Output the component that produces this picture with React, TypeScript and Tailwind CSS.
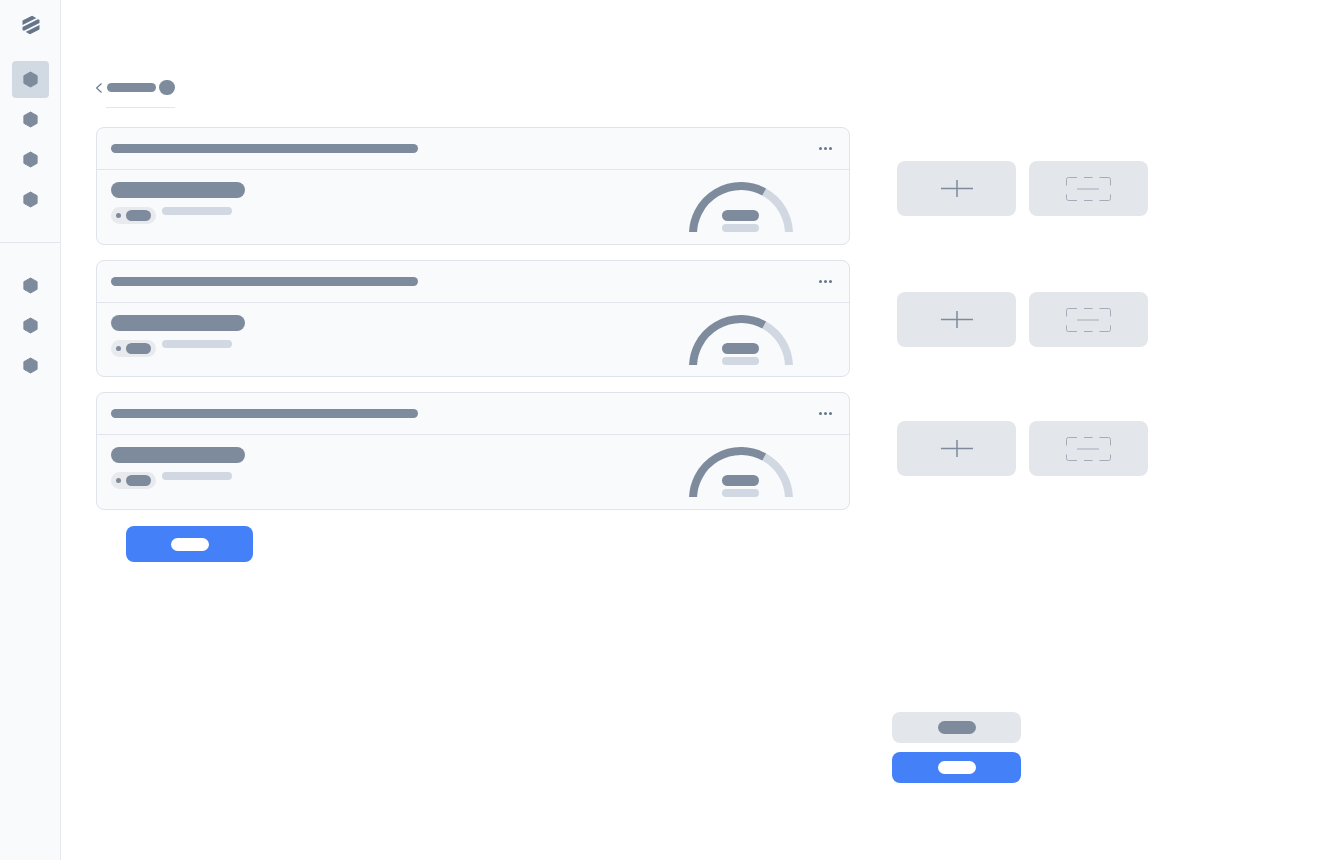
const Hex = () => (
  <svg width="17" height="17" viewBox="0 0 17 17" className="block">
    <path d="M8.5 1 L15.1 4.7 V12.3 L8.5 16 L1.9 12.3 V4.7 Z" fill="#7e8b9c" stroke="#7e8b9c" strokeLinejoin="round" />
  </svg>
);

const Logo = () => (
  <svg width="18" height="20" viewBox="0 0 18 20" className="block">
    <clipPath id="logo-hex">
      <path d="M9 0 L17.5 5 V15 L9 20 L0.5 15 V5 Z" />
    </clipPath>
    <g clipPath="url(#logo-hex)" stroke="#66758a" strokeWidth="4" fill="none">
      <path d="M-2 9 L20 -2" />
      <path d="M-2 15.5 L20 4.5" />
      <path d="M-2 22 L20 11" />
    </g>
  </svg>
);

const NavItem = ({ active }: { active?: boolean }) => (
  <div className={`w-[37px] h-[37px] rounded flex items-center justify-center ${active ? "bg-[#d1d9e3]" : ""}`}>
    <Hex />
  </div>
);

const Gauge = () => (
  <div className="relative w-[104px] h-[50px]">
    <svg width="104" height="50" viewBox="0 0 104 50" fill="none" className="block">
      <path d="M75.2 10 A48 48 0 0 1 100 52" stroke="#d1d8e2" strokeWidth="8" />
      <path d="M4 52 A48 48 0 0 1 75.2 10" stroke="#7e8b9c" strokeWidth="8" />
    </svg>
    <div className="absolute left-[33px] top-[28px] flex flex-col gap-[3px]">
      <div className="w-[37px] h-[11px] rounded-full bg-[#7e8b9c]" />
      <div className="w-[37px] h-[8px] rounded-full bg-[#d1d8e2]" />
    </div>
  </div>
);

const Card = () => (
  <div className="w-[754px] h-[117.5px] rounded-lg border border-[#dfe3ea] bg-[#f8fafc]">
    <div className="h-[42px] border-b border-[#e2e6ec] pl-[14px] pr-[17px] flex items-center justify-between">
      <div className="w-[307px] h-[9px] rounded-full bg-[#7e8b9c]" />
      <div className="flex gap-[2px]">
        <div className="w-[3px] h-[3px] rounded-full bg-[#66758a]" />
        <div className="w-[3px] h-[3px] rounded-full bg-[#66758a]" />
        <div className="w-[3px] h-[3px] rounded-full bg-[#66758a]" />
      </div>
    </div>
    <div className="pl-[14px] pr-[56px] pt-3 flex justify-between">
      <div>
        <div className="w-[134px] h-[16px] rounded-full bg-[#7e8b9c]" />
        <div className="mt-[9px] flex items-start gap-[6px]">
          <div className="w-[45px] h-[17px] rounded-full bg-[#e8eaed] pl-[5px] flex items-center gap-[5px]">
            <div className="w-[5px] h-[5px] rounded-full bg-[#7e8b9c]" />
            <div className="w-[25px] h-[11px] rounded-full bg-[#7e8b9c]" />
          </div>
          <div className="w-[70px] h-[8px] rounded-full bg-[#d1d8e2]" />
        </div>
      </div>
      <Gauge />
    </div>
  </div>
);

const PlusTile = () => (
  <div className="w-[119.4px] h-[55px] rounded-lg bg-[#e3e6ea] flex items-center justify-center">
    <svg width="32" height="17" viewBox="0 0 32 17" fill="none" stroke="#7e8b9c" strokeWidth="1.5" className="block">
      <path d="M0 8.5 H32 M16 0 V17" />
    </svg>
  </div>
);

const DashTile = () => (
  <div className="w-[119.4px] h-[55px] rounded-lg bg-[#e3e6ea] flex items-center justify-center">
    <svg width="45" height="24" viewBox="0 0 45 24" fill="none" stroke="#a3adba" strokeWidth="1" className="block">
      <path d="M0.5 8.5 V2.5 A2 2 0 0 1 2.5 0.5 H11" />
      <path d="M18 0.5 H26.5" />
      <path d="M33.5 0.5 H42.5 A2 2 0 0 1 44.5 2.5 V8.5" />
      <path d="M0.5 17.5 V21.5 A2 2 0 0 0 2.5 23.5 H11" />
      <path d="M18 23.5 H26.5" />
      <path d="M33.5 23.5 H42.5 A2 2 0 0 0 44.5 21.5 V17.5" />
      <path d="M11 12 H33" />
    </svg>
  </div>
);

const TileRow = ({ className }: { className?: string }) => (
  <div className={`flex gap-[12.6px] ${className ?? ""}`}>
    <PlusTile />
    <DashTile />
  </div>
);

export default function App() {
  return (
    <div className="flex h-[860px] bg-white">
      <aside className="w-[61px] shrink-0 border-r border-[#e6e9ef] bg-[#f8fafc]">
        <div className="pl-[22px] pt-[15px]">
          <Logo />
        </div>
        <div className="mt-[26px] pl-3 flex flex-col items-start gap-[3px]">
          <NavItem active />
          <NavItem />
          <NavItem />
          <NavItem />
        </div>
        <div className="mt-[24px] border-t border-[#e2e6ec]" />
        <div className="mt-[24px] pl-3 flex flex-col items-start gap-[3px]">
          <NavItem />
          <NavItem />
          <NavItem />
        </div>
      </aside>
      <main className="flex">
        <div className="ml-[35px] pt-[80px]">
          <div className="flex items-center h-[15px]">
            <svg width="8" height="12" viewBox="0 0 8 12" fill="none" stroke="#66758a" strokeWidth="1.2" className="block">
              <path d="M5.5 1.5 L0.5 6 L5.5 10.5" />
            </svg>
            <div className="ml-[2.5px] w-[49.5px] h-[9px] rounded-full bg-[#7e8b9c]" />
            <div className="ml-[3px] w-[16px] h-[15px] rounded-full bg-[#7e8b9c]" />
          </div>
          <div className="ml-[10px] mt-[12px] w-[69px] border-t border-[#e2e6ec]" />
          <div className="mt-[19px] flex flex-col gap-[15.2px]">
            <Card />
            <Card />
            <Card />
          </div>
          <div className="ml-[30.4px] mt-[16px] w-[126.3px] h-[36.5px] rounded-lg bg-[#4480f8] flex items-center justify-center">
            <div className="w-[38px] h-[13px] rounded-full bg-white" />
          </div>
        </div>
        <div className="ml-[47px] pt-[161px]">
          <TileRow />
          <TileRow className="mt-[76px]" />
          <TileRow className="mt-[74px]" />
          <div className="-ml-[5px] mt-[236px] w-[129px] flex flex-col gap-[9px]">
            <div className="h-[31px] rounded-lg bg-[#e3e6ea] flex items-center justify-center">
              <div className="w-[38px] h-[13px] rounded-full bg-[#7e8b9c]" />
            </div>
            <div className="h-[31px] rounded-lg bg-[#4480f8] flex items-center justify-center">
              <div className="w-[38px] h-[13px] rounded-full bg-white" />
            </div>
          </div>
        </div>
      </main>
    </div>
  );
}
